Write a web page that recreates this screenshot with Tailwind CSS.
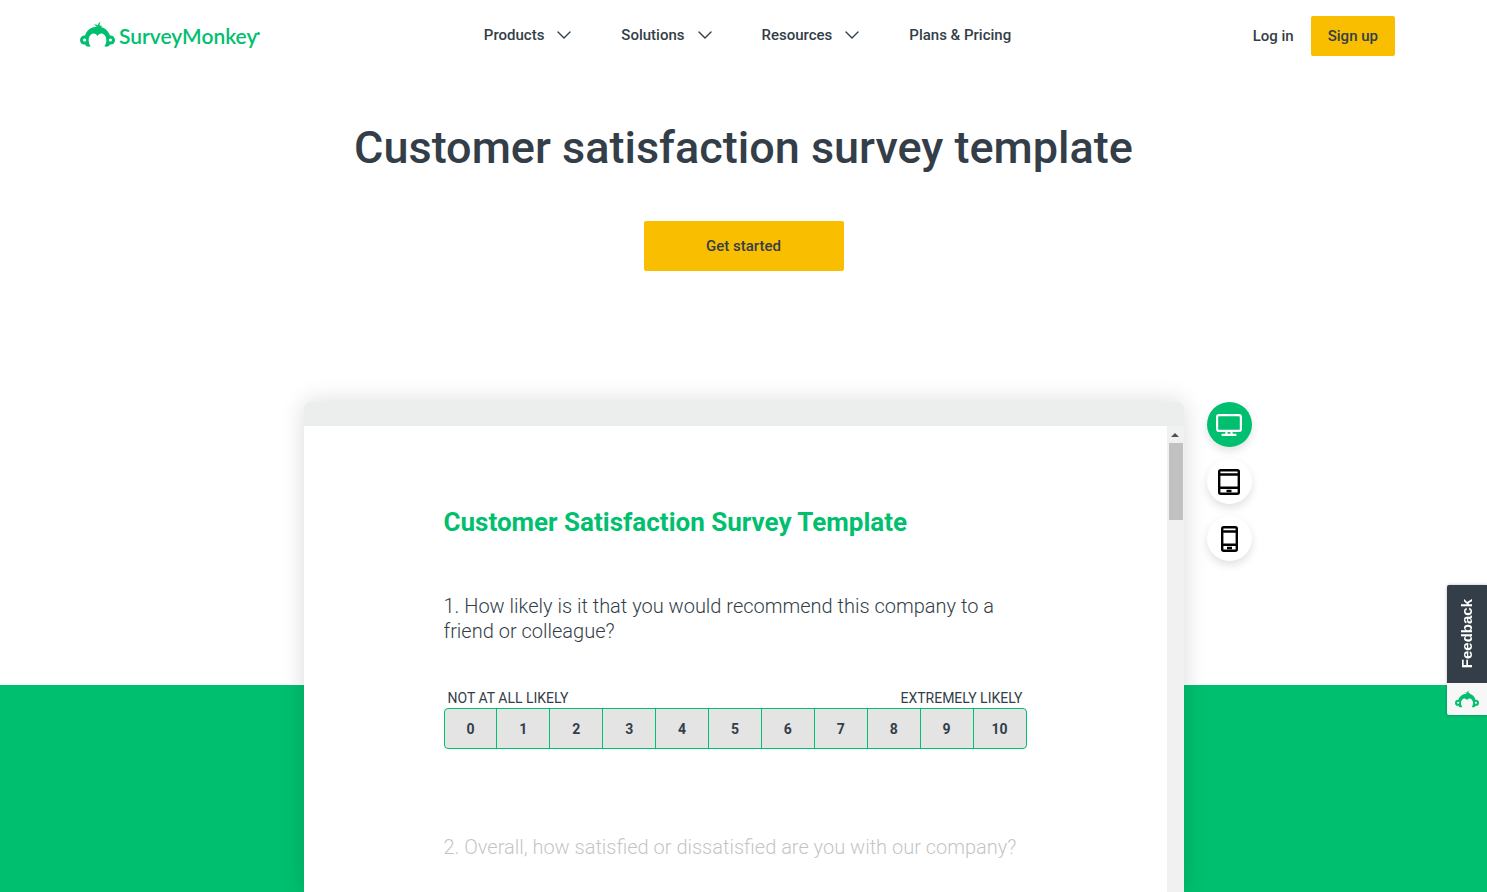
<!DOCTYPE html>
<html lang="en">
<head>
  <meta charset="UTF-8" />
  <meta name="viewport" content="width=device-width, initial-scale=1.0"/>
  <title>Customer satisfaction survey template</title>
  <script src="https://cdn.jsdelivr.net/npm/@tailwindcss/browser@4"></script>
</head>
<body class="min-h-screen flex flex-col bg-white text-[#333e48] font-[Roboto,sans-serif]">

  <!-- Shared logo mark -->
  <svg class="hidden">
    <symbol id="monkey" viewBox="0 0 35 25">
      <path fill="#00bf6f" d="M16.800 4.800 C16 3.800 15 3.200 14 2.800 C15.500 2.200 16.800 2.500 17.700 3.400 C17.800 2 18.700 .6 20.500 0 C19.700 1.300 19.400 2.500 19.500 3.600 C20.600 3.200 21.600 3.400 22.500 4.200 C21.700 4.300 21 4.600 20.700 4.900 C25.300 5.700 28.700 9 29.900 13.600 C32.800 13.400 35 15.300 35 18.200 C35 21.200 32.600 22.900 29.900 22.400 C29.300 24.400 26.800 25.200 24.300 24.300 C25.800 22.300 26.500 20 26.300 17.600 C25.900 14 23.900 11.600 21.300 11.600 C19.700 11.600 18.300 12.500 17.500 14.200 C16.700 12.500 15.300 11.600 13.700 11.600 C11.100 11.600 9.100 14 8.700 17.600 C8.500 20 9.200 22.300 10.700 24.300 C8.200 25.200 5.700 24.400 5.100 22.400 C2.400 22.900 0 21.200 0 18.200 C0 15.300 2.200 13.400 5.100 13.600 C6.400 8.600 11 4.900 16.800 4.800 Z"/>
      <circle cx="4.600" cy="18" r="1.600" fill="#fff"/>
      <circle cx="30.400" cy="18" r="1.600" fill="#fff"/>
    </symbol>
    <symbol id="chevron" viewBox="0 0 14 8">
      <path d="M1 1l6 6 6-6" fill="none" stroke="#333e48" stroke-width="1.400" stroke-linecap="round"/>
    </symbol>
  </svg>

  <!-- Header -->
  <header class="flex items-center justify-between h-[72px] pl-20 pr-[92px]">
    <a href="#" class="flex items-center gap-1 w-[180px] pb-1" aria-label="SurveyMonkey home">
      <svg class="shrink-0 w-[35px] h-[25px]"><use href="#monkey"/></svg>
      <span class="flex items-start pt-1 font-[Lato,sans-serif] font-semibold text-[21px] leading-6 text-[#00bf6f]">SurveyMonkey<span class="shrink-0 size-[3px] mt-2 rounded-full bg-[#00bf6f]"></span></span>
    </a>
    <nav class="flex gap-[50px] pb-0.5 text-[15px] leading-5 font-medium">
      <button class="flex items-center gap-[13px]">Products <svg class="w-[14px] h-2"><use href="#chevron"/></svg></button>
      <button class="flex items-center gap-[13px]">Solutions <svg class="w-[14px] h-2"><use href="#chevron"/></svg></button>
      <button class="flex items-center gap-[13px]">Resources <svg class="w-[14px] h-2"><use href="#chevron"/></svg></button>
      <a href="#">Plans &amp; Pricing</a>
    </nav>
    <div class="flex items-center justify-end gap-[17px] w-[160px] text-[15px] leading-5 font-medium">
      <a href="#">Log in</a>
      <a href="#" class="px-[17px] py-[10px] rounded-xs bg-[#f9be00]">Sign up</a>
    </div>
  </header>

  <!-- Hero -->
  <section class="flex flex-col items-center pt-12 pb-[131px]">
    <h1 class="text-[45px] leading-[56px] font-medium text-center">Customer satisfaction survey template</h1>
    <button class="mt-[45px] w-[200px] h-[50px] rounded-xs bg-[#f9be00] text-[15px] font-medium">Get started</button>
  </section>

  <!-- Template preview -->
  <main class="flex-1 flex justify-center bg-[linear-gradient(transparent_283px,#00bf6f_283px)]">
    <div class="relative flex flex-col w-[880px] rounded-t-md bg-white shadow-[0_0_24px_rgba(0,0,0,0.15)]">
      <div class="h-6 rounded-t-md bg-[#ebeeed]"></div>
      <div class="flex-1 flex">
        <form class="flex-1 px-[140px] pt-20 pb-8">
          <h2 class="text-[26px] leading-8 font-bold text-[#00bf6f]">Customer Satisfaction Survey Template</h2>
          <fieldset class="mt-14">
            <legend class="text-xl leading-[25px] font-light">1. How likely is it that you would recommend this company to a friend or colleague?</legend>
            <div class="flex justify-between px-1 pt-11 text-sm leading-5">
              <span>NOT AT ALL LIKELY</span>
              <span>EXTREMELY LIKELY</span>
            </div>
            <div class="flex h-[41px] border border-[#00bf6f] rounded divide-x divide-[#00bf6f] bg-[#e4e4e4] text-sm font-bold overflow-hidden">
              <label class="flex-1 flex items-center justify-center"><input type="radio" name="nps" value="0" class="sr-only">0</label>
              <label class="flex-1 flex items-center justify-center"><input type="radio" name="nps" value="1" class="sr-only">1</label>
              <label class="flex-1 flex items-center justify-center"><input type="radio" name="nps" value="2" class="sr-only">2</label>
              <label class="flex-1 flex items-center justify-center"><input type="radio" name="nps" value="3" class="sr-only">3</label>
              <label class="flex-1 flex items-center justify-center"><input type="radio" name="nps" value="4" class="sr-only">4</label>
              <label class="flex-1 flex items-center justify-center"><input type="radio" name="nps" value="5" class="sr-only">5</label>
              <label class="flex-1 flex items-center justify-center"><input type="radio" name="nps" value="6" class="sr-only">6</label>
              <label class="flex-1 flex items-center justify-center"><input type="radio" name="nps" value="7" class="sr-only">7</label>
              <label class="flex-1 flex items-center justify-center"><input type="radio" name="nps" value="8" class="sr-only">8</label>
              <label class="flex-1 flex items-center justify-center"><input type="radio" name="nps" value="9" class="sr-only">9</label>
              <label class="flex-1 flex items-center justify-center"><input type="radio" name="nps" value="10" class="sr-only">10</label>
            </div>
          </fieldset>
          <p class="mt-[86px] text-xl leading-[25px] font-light opacity-30 whitespace-nowrap">2. Overall, how satisfied or dissatisfied are you with our company?</p>
        </form>
        <!-- Scrollbar -->
        <div class="w-[17px] flex flex-col items-end pr-px bg-[#f1f1f1]">
          <svg class="w-4 h-[17px]" viewBox="0 0 16 17"><path d="M4 11l4-4 4 4z" fill="#505050"/></svg>
          <div class="w-[14px] h-[77px] bg-[#c1c1c1]"></div>
        </div>
      </div>

      <!-- Device switcher -->
      <div class="absolute left-full top-0 ml-[23px] flex flex-col gap-3">
        <button aria-label="Desktop" class="size-[45px] flex items-center justify-center rounded-full bg-[#00bf6f] shadow-[0_4px_8px_rgba(0,0,0,0.12)]">
          <svg class="w-[26px] h-[22px]" viewBox="0 0 26 22" fill="none" stroke="#fff" stroke-width="2.200" stroke-linecap="round"><rect x="1.100" y="1.100" width="23.800" height="15.800" rx="2"/><path d="M10.500 17v3M15.500 17v3M6.500 20.900h13"/></svg>
        </button>
        <button aria-label="Tablet" class="size-[45px] flex items-center justify-center rounded-full bg-white shadow-[0_4px_8px_rgba(0,0,0,0.12)]">
          <svg class="w-[22px] h-[26px]" viewBox="0 0 22 26" fill="none" stroke="#000" stroke-width="2.400"><rect x="1.200" y="1.200" width="19.600" height="23.600" rx="1.500"/><path d="M1 5.500h20M1 18.800h20M8.500 22h5"/></svg>
        </button>
        <button aria-label="Phone" class="size-[45px] flex items-center justify-center rounded-full bg-white shadow-[0_4px_8px_rgba(0,0,0,0.12)]">
          <svg class="w-[17px] h-[26px]" viewBox="0 0 17 26" fill="none" stroke="#000" stroke-width="2.400"><rect x="1.200" y="1.200" width="14.600" height="23.600" rx="1.500"/><path d="M1 5.500h15M1 18.800h15M6 22h5"/></svg>
        </button>
      </div>
    </div>
  </main>

  <!-- Feedback tab -->
  <button class="fixed right-0 top-[585px] w-10 rounded-l-xs overflow-hidden shadow-[0_0_3px_rgba(0,0,0,0.3)]">
    <span class="flex items-center justify-center h-[98px] bg-[#333e48] text-white">
      <span class="[writing-mode:vertical-rl] rotate-180 text-[15px] font-bold font-['Liberation_Sans',sans-serif]">Feedback</span>
    </span>
    <span class="flex items-center justify-center h-8 bg-[#f7f7f7]">
      <svg class="w-6 h-[18px]"><use href="#monkey"/></svg>
    </span>
  </button>

</body>
</html>
